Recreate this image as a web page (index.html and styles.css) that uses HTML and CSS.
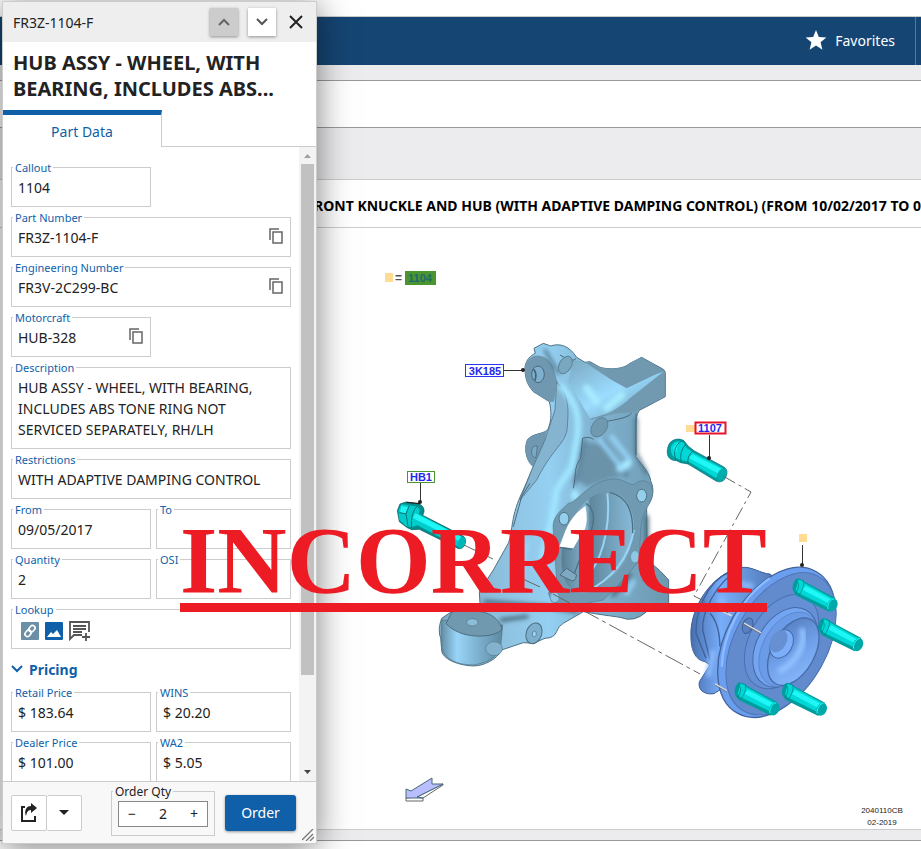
FILE: index.html
```html
<!DOCTYPE html>
<html lang="en">
<head>
    <meta charset="UTF-8">
    <meta name="viewport" content="width=device-width, initial-scale=1.0">
    <title>Front Knuckle and Hub</title>
    <link rel="stylesheet" href="styles.css">
</head>
<body>
    <div class="app">
        <!-- Top navigation -->
        <nav class="navbar">
            <a class="favorites" href="#">
                <svg width="22" height="22" viewBox="0 0 24 24"><path fill="#fff" d="M12 1l3.1 7.6 8.2.6-6.3 5.3 2 8L12 18.100l-7 4.400 2-8L.7 9.200l8.200-.6z"/></svg>
                Favorites
            </a>
        </nav>
        <div class="searchbar"></div>
        <div class="toolbar"></div>

        <main class="illustration">
            <h1 class="section-title"><span class="crumb">E</span>FRONT KNUCKLE AND HUB (WITH ADAPTIVE DAMPING CONTROL) (FROM 10/02/2017 TO 0</h1>
            <svg class="diagram" viewBox="0 228 921 601">
                <defs>
                    <linearGradient id="steel" x1="0" x2="1">
                        <stop offset="0" stop-color="#7fa9c2"/>
                        <stop offset=".3" stop-color="#8fc3e2"/>
                        <stop offset=".48" stop-color="#94d0f2"/>
                        <stop offset=".65" stop-color="#83b6d4"/>
                        <stop offset="1" stop-color="#6c98b0"/>
                    </linearGradient>
                    <linearGradient id="lug" x1="0" x2="1">
                        <stop offset="0" stop-color="#6590a8"/>
                        <stop offset=".25" stop-color="#98d5f8"/>
                        <stop offset="1" stop-color="#5d88a0"/>
                    </linearGradient>
                    <linearGradient id="arm" x1="0" y1="0" x2="1" y2="1">
                        <stop offset="0" stop-color="#7ba8c2"/>
                        <stop offset=".5" stop-color="#9bdcff"/>
                        <stop offset="1" stop-color="#648da5"/>
                    </linearGradient>
                    <linearGradient id="bore" x1="0" x2="1">
                        <stop offset="0" stop-color="#587d92"/>
                        <stop offset=".35" stop-color="#83b6d2"/>
                        <stop offset=".4" stop-color="#5f879d"/>
                        <stop offset="1" stop-color="#88bcda"/>
                    </linearGradient>
                    <linearGradient id="hub" x1="0" x2="1">
                        <stop offset="0" stop-color="#476fae"/>
                        <stop offset=".35" stop-color="#78adf9"/>
                        <stop offset="1" stop-color="#4f77b4"/>
                    </linearGradient>
                    <linearGradient id="cup" x1="0" y1="0" x2="1" y2="1">
                        <stop offset="0" stop-color="#5379b8"/>
                        <stop offset=".5" stop-color="#6f9fe8"/>
                        <stop offset="1" stop-color="#8dbcff"/>
                    </linearGradient>
                    <filter id="soft"><feGaussianBlur stdDeviation="7"/></filter>
                    <g id="stud">
                        <path d="M-2-22L12-18 22-10 112 38 92 78-6 30-14 18C-22 6-14-18-2-22z" fill="#009d9d"/>
                        <path d="M0-18L12-14 22-6 106 40 94 68 0 22-8 14z" fill="#00d8d8"/>
                        <path d="M22 0L102 43 96 56 12 12z" fill="#1ff6f6"/>
                        <path d="M-6-14C4-8 2 10-8 22M14-15C20-8 14 12 2 28" stroke="#077" fill="none" stroke-width="2"/>
                        <ellipse cx="102" cy="58" rx="15" ry="20" transform="rotate(25 102 58)" fill="#00a9a9"/>
                        <path d="M89 70C86 58 96 41 108 39" stroke="#2ff" fill="none" stroke-width="3"/>
                    </g>
                </defs>

                <!-- Knuckle -->
                <g transform="translate(430 330) scale(.3333)">
                    <path fill="url(#steel)" stroke="#4f7184" stroke-width="3" d="M312 55L340 40 362 48C390 38 418 48 440 82L465 97 480 95 510 112C540 120 580 118 600 100L635 82 700 118Q706 122 706 130V200L630 240C615 252 618 290 618 380 640 410 660 430 662 452 675 480 668 510 650 530L652 690 690 722 716 750V820L650 845Q612 880 570 862L500 852 460 845 400 880Q385 888 380 905 372 925 345 925L310 940 280 938 215 960C200 990 160 1008 130 1008 80 1006 35 985 35 960L32 925Q22 900 35 865L65 845 150 820 148 785 190 720 235 640C250 600 240 560 280 480L310 410C285 390 283 350 292 330 305 310 345 312 354 298 366 270 364 240 358 215L310 185C288 160 285 140 285 110 290 88 300 78 316 70z"/>
                    <path fill="#7099b1" d="M286 115C288 70 345 60 370 110L382 155 372 215 358 215 318 190C295 170 285 150 286 115zM292 330C305 312 340 315 352 298L340 350 310 410C285 390 283 355 292 330z"/>
                    <path fill="#85b4d0" d="M380 155C420 200 415 240 412 290 410 340 370 350 320 450L270 510 305 420 345 330 375 240z" stroke="#496777" stroke-width="2"/>
                    <path fill="#7199b0" d="M600 100L635 82 704 122V200L612 247 560 250 480 270 540 215 600 170 700 125 600 110z"/>
                    <path fill="url(#arm)" d="M430 90C480 95 520 135 600 155L700 125 600 205C570 235 520 260 480 265L415 155z"/>
                    <path fill="#7099af" d="M465 97L480 95 510 112C540 120 580 118 600 100L635 82 700 122 590 175 545 150z"/>
                    <path fill="#6b93aa" filter="url(#soft)" d="M462 335L530 345 590 430 470 470 440 450z"/>
                    <g filter="url(#soft)" fill="none" stroke-linecap="round">
                        <path stroke="#a0e6ff" stroke-width="20" d="M395 170C440 220 450 260 442 320L425 410 380 480 365 570 330 720"/>
                        <path stroke="#4e7185" stroke-width="9" d="M462 330L452 385 435 460M345 60L385 130M618 265V370L650 430M520 330L590 435"/>
                        <path stroke="#a7ecff" stroke-width="22" d="M470 175L500 215M530 235L575 195M595 400L570 415M435 492V500"/>
                        <path stroke="#99daff" stroke-width="12" d="M545 320L600 390M510 330L580 420M610 755L590 790M290 640L270 770"/>
                        <path stroke="#486a7c" stroke-width="12" d="M165 815L350 830 440 845M215 870L290 860M550 795L600 735M650 560V640"/>
                    </g>
                    <path fill="none" stroke="#4c6a7b" stroke-width="3" d="M458 325Q478 318 490 328M458 325L452 385C430 415 440 430 430 475M250 590L275 500 300 460M390 75Q430 100 438 85M525 275C560 268 590 265 605 250M618 250V375"/>
                    <ellipse cx="324" cy="133" rx="19" ry="25" fill="#7db0ce" stroke="#496474" stroke-width="3"/>
                    <path d="M310 117Q322 128 315 152" fill="none" stroke="#456272" stroke-width="5"/>
                    <ellipse cx="406" cy="105" rx="18" ry="28" transform="rotate(30 406 105)" fill="#7aa7c0" stroke="#5a8095" stroke-width="3"/>
                    <ellipse cx="508" cy="292" rx="22" ry="32" transform="rotate(35 508 292)" fill="#6f99af" stroke="#52778c" stroke-width="2"/>
                    <path d="M322 348Q305 345 305 365T318 382z" fill="#7baac6" stroke="#4a6575" stroke-width="2"/>

                    <!-- Bearing seat -->
                    <path fill="#709ab1" stroke="#567b90" stroke-width="2" d="M370 600C365 560 390 545 415 520 440 520 470 460 540 448 590 440 600 480 625 455 650 445 670 465 668 490 665 525 635 540 632 600L628 690C600 730 560 770 520 810L420 830 365 815 355 790 380 750z"/>
                    <path fill="url(#bore)" d="M410 600C450 510 500 480 550 486 590 494 618 550 610 610 600 700 530 790 440 790 395 770 380 690 410 600z"/>
                    <path fill="#fff" d="M405 605C420 570 440 545 466 528 475 570 470 600 450 620L430 655 388 650z"/>
                    <path fill="none" stroke="#99d4f4" stroke-width="6" d="M532 490C540 560 530 660 480 730M612 600C595 690 540 750 470 785"/>
                    <path fill="none" stroke="#4d6f82" stroke-width="4" d="M468 520C500 540 495 590 470 630L430 740M540 487C590 500 610 540 608 610M390 652L425 658"/>
                    <path fill="#7da9c2" stroke="#4b6a7b" stroke-width="3" d="M390 735L410 715 440 735Q435 760 420 750z"/>
                    <ellipse cx="635" cy="497" rx="15" ry="19" fill="#95cfee" stroke="#4f7082" stroke-width="3"/>
                    <ellipse cx="402" cy="566" rx="15" ry="19" fill="#95cfee" stroke="#4f7082" stroke-width="3"/>
                    <ellipse cx="615" cy="680" rx="12" ry="17" fill="#8fc8e6"/>
                    <ellipse cx="374" cy="802" rx="12" ry="15" fill="#8fc8e6"/>

                    <!-- Lower arm -->
                    <path fill="url(#lug)" stroke="#506f81" stroke-width="2" d="M35 870V955C45 990 85 1005 130 1005 165 1000 205 985 212 950L218 885Z"/>
                    <path fill="#7098ae" stroke="#4e6c7e" stroke-width="3" d="M48 880L66 846Q100 838 150 845C190 850 218 880 214 900 190 925 90 930 48 880z"/>
                    <ellipse cx="127" cy="877" rx="17" ry="11" fill="#8bbdd9" stroke="#52748a" stroke-width="2"/>
                    <ellipse cx="192" cy="956" rx="25" ry="21" fill="#82b2ce" stroke="#557b91" stroke-width="2"/>
                    <ellipse cx="312" cy="910" rx="23" ry="32" transform="rotate(20 312 910)" fill="#7eb0cd" stroke="#4c6c7f" stroke-width="3"/>
                    <ellipse cx="313" cy="912" rx="6" ry="9" fill="#9bd8f8" stroke="#47677a" stroke-width="2"/>
                </g>

                <!-- Hub assembly -->
                <g transform="translate(670 550) scale(.3333)">
                    <path fill="url(#hub)" stroke="#3d5e96" stroke-width="3" d="M215 52C140 65 70 150 63 240 60 300 75 330 105 335L120 345 88 395C82 425 110 435 132 431L165 410 320 90 300 72C270 70 250 50 215 52z"/>
                    <path fill="none" stroke="#3f609a" stroke-width="4" d="M175 68C115 95 75 180 78 250T108 325M205 60C135 100 95 190 98 240L120 330M120 190Q148 220 150 290"/>
                    <path filter="url(#soft)" fill="none" stroke="#8abaff" stroke-width="16" d="M150 145L175 190M130 300L115 380M200 100L250 110"/>
                    <ellipse cx="320" cy="277" rx="151" ry="243" transform="rotate(29 320 277)" fill="#6c9ef0" stroke="#41639e" stroke-width="4"/>
                    <ellipse cx="333" cy="281" rx="139" ry="231" transform="rotate(29 333 281)" fill="#628bce" stroke="#4d75b6" stroke-width="3"/>
                    <path fill="none" stroke="#8bbcff" stroke-width="7" d="M155 350C160 250 215 140 300 85"/>
                    <ellipse cx="335" cy="275" rx="96" ry="152" transform="rotate(29 335 275)" fill="#6690d5" stroke="#4a70b0" stroke-width="3"/>
                    <ellipse cx="346" cy="292" rx="86" ry="128" transform="rotate(29 346 292)" fill="#74a5f2" stroke="#4569a5" stroke-width="3"/>
                    <ellipse cx="356" cy="298" rx="78" ry="120" transform="rotate(29 356 298)" fill="#6b9ae6" stroke="#557fc4" stroke-width="2"/>
                    <ellipse cx="370" cy="305" rx="64" ry="110" transform="rotate(29 370 305)" fill="url(#cup)" stroke="#456ba9" stroke-width="4"/>
                    <path filter="url(#soft)" fill="none" stroke="#92c2ff" stroke-width="18" d="M395 235C410 280 380 340 325 365"/>
                    <ellipse cx="335" cy="282" rx="32" ry="45" transform="rotate(29 335 282)" fill="#7caef9" stroke="#4569a7" stroke-width="3"/>
                    <ellipse cx="326" cy="274" rx="23" ry="36" transform="rotate(29 326 274)" fill="#6790d3"/>
                    <ellipse cx="233" cy="227" rx="15" ry="24" transform="rotate(20 233 227)" fill="#587fc0" stroke="#3d5f99" stroke-width="3"/>
                    <path fill="none" stroke="#ddd" stroke-width="5" d="M222 220L273 249M135 402L170 422M155 182L185 197"/>
                    <path fill="none" stroke="#555" stroke-width="2" d="M222 223L273 252M135 405L170 425"/>
                    <use href="#stud" x="385" y="107"/>
                    <use href="#stud" x="462" y="226"/>
                    <use href="#stud" x="211" y="419"/>
                    <use href="#stud" x="353" y="420"/>
                </g>

                <!-- Wheel stud 1107 -->
                <g transform="translate(660 410) scale(.3333)">
                    <path fill="#009d9d" stroke="#067" stroke-width="2" d="M23 115C26 92 50 80 72 92L84 108 102 122 190 170C204 178 202 190 198 200 192 216 178 218 168 213L84 162 62 158 50 152C28 152 18 138 23 115z"/>
                    <path fill="#00d8d8" d="M34 108C40 94 56 90 70 98L80 114 100 128 188 174 168 204 84 154 62 150 44 142C34 136 30 120 34 108z"/>
                    <path fill="#1ff6f6" d="M98 133L186 178 178 192 86 144zM40 112L54 98 50 124 42 130z"/>
                    <path fill="none" stroke="#077" stroke-width="3" d="M66 92C46 104 38 125 48 152M78 102Q56 126 64 158M100 122Q80 138 84 162"/>
                    <ellipse cx="186" cy="194" rx="13" ry="20" transform="rotate(25 186 194)" fill="#00adad"/>
                </g>

                <!-- Bolt HB1 -->
                <g transform="translate(380 440) scale(.3333)">
                    <path fill="#008f8f" stroke="#055" stroke-width="2" d="M52 212L60 192 78 186 118 192Q134 200 132 216L128 226 245 286Q258 292 257 306 252 328 236 326L118 268 95 269 80 262 58 245z"/>
                    <path fill="#00cccc" d="M55 212L64 193 88 196 112 200Q122 206 116 222L246 290 236 320 112 256 94 262 78 258 58 240z"/>
                    <path fill="#1ff6f6" d="M106 220L244 290 238 304 98 234zM64 198L84 202 76 220 60 216z"/>
                    <path fill="none" stroke="#077" stroke-width="3" d="M88 196L78 222 84 258M58 218L78 222M112 198Q92 216 94 264"/>
                    <path stroke="#222" stroke-width="4" d="M80 187L120 191"/>
                    <ellipse cx="245" cy="308" rx="11" ry="18" transform="rotate(20 245 308)" fill="#00b5b5"/>
                </g>

                <!-- Centre lines -->
                <g fill="none" stroke="#666" stroke-width="1">
                    <path d="M464 545L493 559M512 574L540 587"/>
                    <path d="M553 594L700 674" stroke-dasharray="20 4 4 4"/>
                    <path d="M723 476L751 492 694 596 730 614" stroke-dasharray="14 4 3 4"/>
                    <path stroke="#333" d="M504 370.500H522M420.500 483V502M709.500 435V457M802.500 545V565"/>
                </g>
                <g fill="#222">
                    <circle cx="523" cy="370" r="2"/>
                    <circle cx="420" cy="502" r="2"/>
                    <circle cx="709" cy="458" r="2"/>
                    <circle cx="802" cy="565" r="2"/>
                </g>

                <!-- Callouts -->
                <g fill="#ffdc93">
                    <rect x="385" y="273" width="8" height="9"/>
                    <rect x="686" y="425" width="9" height="7"/>
                    <rect x="799" y="534" width="8" height="8"/>
                </g>
                <rect x="405" y="271" width="31" height="14" fill="#4b9530"/>
                <g fill="#fff" stroke-width="1">
                    <rect x="465.500" y="364.500" width="38" height="12" stroke="#2c35ee"/>
                    <rect x="407.500" y="471.500" width="27" height="11" stroke="#4b9530"/>
                    <rect x="695.500" y="422.500" width="30" height="11" stroke="#e5142b" stroke-width="2"/>
                </g>
                <text class="note" x="395" y="282">=</text>
                <text class="callout callout-active" x="420" y="282">1104</text>
                <text class="callout" x="485" y="375">3K185</text>
                <text class="callout" x="421" y="481">HB1</text>
                <text class="callout" x="710" y="432">1107</text>
                <text class="reference" x="882" y="813">2040110CB</text>
                <text class="reference" x="882" y="825">02-2019</text>

                <!-- Front-of-vehicle arrow -->
                <path d="M406 798V801H423V798L443 785V784L417 797z" fill="#fff" stroke="#666"/>
                <path d="M406 789L411 791 432 778V784H443L417 797 423 798H406z" fill="#b9beff" stroke="#466879"/>
            </svg>
        </main>
        <div class="bottom-strip"></div>
    </div>

    <!-- Part window -->
    <section class="panel">
        <header class="panel-header">
            <span class="panel-id">FR3Z-1104-F</span>
            <button class="step" aria-label="Previous part" disabled>
                <svg width="12" height="8" viewBox="0 0 12 8"><path d="M1 7l5-5 5 5" fill="none" stroke="#666" stroke-width="2"/></svg>
            </button>
            <button class="step" aria-label="Next part">
                <svg width="12" height="8" viewBox="0 0 12 8"><path d="M1 1l5 5 5-5" fill="none" stroke="#555" stroke-width="2"/></svg>
            </button>
            <button class="close" aria-label="Close">
                <svg width="14" height="14" viewBox="0 0 14 14"><path d="M1 1l12 12M13 1L1 13" stroke="#222" stroke-width="2"/></svg>
            </button>
        </header>
        <h2 class="panel-title">HUB ASSY - WHEEL, WITH BEARING, INCLUDES ABS...</h2>
        <div class="tabs">
            <button class="tab">Part Data</button>
        </div>

        <div class="panel-body">
            <div class="fields">
                <fieldset class="field">
                    <legend>Callout</legend>
                    <div class="value">1104</div>
                </fieldset>
                <fieldset class="field wide">
                    <legend>Part Number</legend>
                    <div class="value">FR3Z-1104-F
                        <button class="copy" aria-label="Copy part number"><svg width="14" height="16" viewBox="0 0 14 16"><path d="M1 12V1h9M4 4h9v11H4z" fill="none" stroke="#666" stroke-width="1.500"/></svg></button>
                    </div>
                </fieldset>
                <fieldset class="field wide">
                    <legend>Engineering Number</legend>
                    <div class="value">FR3V-2C299-BC
                        <button class="copy" aria-label="Copy engineering number"><svg width="14" height="16" viewBox="0 0 14 16"><path d="M1 12V1h9M4 4h9v11H4z" fill="none" stroke="#666" stroke-width="1.500"/></svg></button>
                    </div>
                </fieldset>
                <fieldset class="field first">
                    <legend>Motorcraft</legend>
                    <div class="value">HUB-328
                        <button class="copy" aria-label="Copy Motorcraft number"><svg width="14" height="16" viewBox="0 0 14 16"><path d="M1 12V1h9M4 4h9v11H4z" fill="none" stroke="#666" stroke-width="1.500"/></svg></button>
                    </div>
                </fieldset>
                <fieldset class="field wide">
                    <legend>Description</legend>
                    <div class="value">HUB ASSY - WHEEL, WITH BEARING, INCLUDES ABS TONE RING NOT SERVICED SEPARATELY, RH/LH</div>
                </fieldset>
                <fieldset class="field wide">
                    <legend>Restrictions</legend>
                    <div class="value">WITH ADAPTIVE DAMPING CONTROL</div>
                </fieldset>
                <fieldset class="field">
                    <legend>From</legend>
                    <div class="value">09/05/2017</div>
                </fieldset>
                <fieldset class="field">
                    <legend>To</legend>
                    <div class="value"></div>
                </fieldset>
                <fieldset class="field">
                    <legend>Quantity</legend>
                    <div class="value">2</div>
                </fieldset>
                <fieldset class="field">
                    <legend>OSI</legend>
                    <div class="value"></div>
                </fieldset>
                <fieldset class="field wide">
                    <legend>Lookup</legend>
                    <div class="value lookup">
                        <button aria-label="Linked parts">
                            <svg width="18" height="18" viewBox="0 0 18 18"><rect width="18" height="18" rx="1" fill="#6b90a5"/><g transform="rotate(-50 9 9)" fill="none" stroke="#fff" stroke-width="1.600"><rect x="2.500" y="6.500" width="7" height="5" rx="2.500"/><rect x="8.500" y="6.500" width="7" height="5" rx="2.500"/></g></svg>
                        </button>
                        <button aria-label="Pictures">
                            <svg width="18" height="18" viewBox="0 0 18 18"><rect width="18" height="18" rx="1" fill="#0f5fa9"/><path d="M2 15l4-5 2 2 4-4 4 7z" fill="#fff"/></svg>
                        </button>
                        <button aria-label="Add note">
                            <svg width="22" height="20" viewBox="0 0 22 20"><path d="M20 11V1H1v17l4-4h8M4 5h13M4 8h13M4 11h9M17 12v8M13 16h8" fill="none" stroke="#555" stroke-width="1.800"/></svg>
                        </button>
                    </div>
                </fieldset>
                <button class="group-title">
                    <svg width="12" height="8" viewBox="0 0 12 8"><path d="M1 1l5 5 5-5" fill="none" stroke="#0f5fa9" stroke-width="2"/></svg>
                    Pricing
                </button>
                <fieldset class="field">
                    <legend>Retail Price</legend>
                    <div class="value">$ 183.64</div>
                </fieldset>
                <fieldset class="field">
                    <legend>WINS</legend>
                    <div class="value">$ 20.20</div>
                </fieldset>
                <fieldset class="field">
                    <legend>Dealer Price</legend>
                    <div class="value">$ 101.00</div>
                </fieldset>
                <fieldset class="field">
                    <legend>WA2</legend>
                    <div class="value">$ 5.05</div>
                </fieldset>
            </div>
            <div class="scrollbar">
                <svg width="7" height="4" viewBox="0 0 7 4"><path d="M0 4l3.500-4L7 4z" fill="#a0a0a0"/></svg>
                <div class="thumb"></div>
                <svg width="7" height="4" viewBox="0 0 7 4"><path d="M0 0l3.500 4L7 0z" fill="#444"/></svg>
            </div>
        </div>

        <footer class="panel-footer">
            <div class="share">
                <button aria-label="Share">
                    <svg width="18" height="20" viewBox="0 0 18 20"><path d="M5 4H2v14h13v-5" fill="none" stroke="#222" stroke-width="2"/><path d="M11 0l6 5-6 5V7C8 7 7 9 6 13 4 8 6 3 11 3z" fill="#222"/></svg>
                </button>
                <button aria-label="More actions">
                    <svg width="10" height="5" viewBox="0 0 10 5"><path d="M0 0h10L5 5z" fill="#222"/></svg>
                </button>
            </div>
            <fieldset class="quantity">
                <legend><label for="qty">Order Qty</label></legend>
                <div class="stepper">
                    <button aria-label="Less">−</button>
                    <input id="qty" type="text" value="2">
                    <button aria-label="More">+</button>
                </div>
            </fieldset>
            <button class="order">Order</button>
            <svg class="grip" width="12" height="12" viewBox="0 0 12 12"><path d="M0 11L11 0M4 12l7-7M8 12l4-4" stroke="#777" stroke-width="1.300"/></svg>
        </footer>
    </section>

    <div class="stamp">INCORRECT</div>
</body>
</html>
```
FILE: styles.css
```css
/* General Styling */
* {
    box-sizing: border-box;
}
body {
    margin: 0;
    overflow: hidden;
    font-family: "Noto Sans", "Open Sans", sans-serif;
    font-size: 14px;
    color: #222;
    background: #fff;
}
button {
    display: flex;
    align-items: center;
    justify-content: center;
    margin: 0;
    padding: 0;
    border: none;
    background: none;
    font: inherit;
    color: inherit;
    cursor: pointer;
}

/* Page behind the part window */
.app {
    display: flex;
    flex-direction: column;
    height: 100vh;
    padding: 16px 0 8px;
}
.navbar {
    display: flex;
    flex: none;
    justify-content: flex-end;
    height: 49px;
    padding-right: 5px;
    border-top: 1px solid #ccc;
    background: #154573;
}
.favorites {
    display: flex;
    align-items: center;
    gap: 8px;
    padding: 0 20px 2px 0;
    border-right: 1px solid #58789a;
    color: #fff;
    text-decoration: none;
}
.searchbar {
    flex: none;
    height: 63px;
    border-top: 15px solid #ecebed;
    border-bottom: 1px solid #999;
    box-shadow: inset 0 1px #999;
}
.toolbar {
    flex: none;
    height: 51px;
    background: #ecebed;
}
.illustration {
    flex: 1;
    min-height: 0;
    overflow: hidden;
    border-top: 1px solid #ccc;
    border-bottom: 1px solid #ccc;
}
.section-title {
    display: flex;
    gap: 306px;
    height: 48px;
    margin: 0;
    border-bottom: 1px solid #ccc;
    font-size: 14px;
    line-height: 52px;
    color: #000;
    white-space: nowrap;
}
.crumb {
    display: flex;
    justify-content: flex-end;
    width: 3px;
    overflow: hidden;
}
.bottom-strip {
    flex: none;
    height: 11px;
    border-bottom: 1px solid #999;
    background: #ecebed;
}

/* Diagram */
.diagram {
    display: block;
    width: 100%;
}
.callout {
    font: bold 11px "Liberation Sans", sans-serif;
    text-anchor: middle;
    fill: #1f28ee;
}
.callout-active {
    fill: #1d6b69;
}
.note {
    font: bold 12px "Liberation Sans", sans-serif;
    fill: #555;
}
.reference {
    font: 8px "Liberation Sans", sans-serif;
    text-anchor: middle;
    fill: #222;
}

/* Part window */
.panel {
    position: absolute;
    top: 1px;
    bottom: 5px;
    left: 2px;
    display: flex;
    flex-direction: column;
    width: 315px;
    border: 1px solid #ccc;
    background: #fff;
    box-shadow: 0 4px 32px rgba(0, 0, 0, 0.5);
}
.panel-header {
    display: flex;
    flex: none;
    align-items: center;
    gap: 10px;
    height: 40px;
    padding: 0 10px;
    background: #eee;
}
.panel-id {
    flex: 1;
}
.step {
    width: 28px;
    height: 28px;
    background: #fff;
    box-shadow: 0 1px 3px rgba(0, 0, 0, 0.4);
}
.step:disabled {
    background: #ccc;
}
.close {
    width: 20px;
    height: 28px;
}
.panel-title {
    margin: 0;
    padding: 8px 10px;
    font-size: 20px;
    line-height: 26px;
}
.tabs {
    display: flex;
    flex: none;
    height: 37px;
}
.tabs::after {
    content: "";
    flex: 1;
    border-bottom: 1px solid #ccc;
}
.tab {
    width: 159px;
    border-top: 5px solid #0f5fa9;
    border-right: 1px solid #ccc;
    color: #0f5fa9;
}
.panel-body {
    display: flex;
    flex: 1;
    min-height: 0;
    overflow: hidden;
}

/* Fields */
.fields {
    display: grid;
    flex: 1;
    grid-template-columns: 140px 1fr;
    gap: 3px 5px;
    align-content: start;
    padding: 13px 8px 0;
}
.field {
    min-width: 0;
    margin: 0;
    padding: 0;
    border: 1px solid #ccc;
}
.first {
    grid-column: 1;
}
.wide,
.group-title {
    grid-column: 1 / -1;
}
.field legend,
.quantity legend {
    margin-left: 1px;
    padding: 0 2px;
    font-size: 12px;
    line-height: 15px;
}
.field legend {
    font-size: 11px;
    color: #0f5fa9;
}
.value {
    display: flex;
    justify-content: space-between;
    min-height: 31px;
    padding: 2px 7px 8px 6px;
    line-height: 21px;
}
.copy {
    height: 18px;
}
.lookup {
    align-items: center;
    justify-content: flex-start;
    gap: 6px;
    padding: 3px 7px 6px 9px;
}
.group-title {
    justify-content: flex-start;
    gap: 6px;
    height: 30px;
    padding-top: 4px;
    font-weight: bold;
    color: #0f5fa9;
}

/* Scrollbar */
.scrollbar {
    display: flex;
    flex: none;
    flex-direction: column;
    align-items: center;
    width: 17px;
    padding: 7px 0;
    background: #f3f3f3;
}
.thumb {
    flex: 1;
    width: 13px;
    margin: 6px 0 95px;
    background: #c1c1c1;
}

/* Footer */
.panel-footer {
    display: flex;
    flex: none;
    align-items: center;
    height: 62px;
    padding-left: 8px;
    border-top: 1px solid #ccc;
    background: #f8f8f8;
}
.share {
    display: flex;
    margin-right: auto;
}
.share button {
    width: 36px;
    height: 36px;
    border: 1px solid #ccc;
    border-radius: 2px;
    background: #fff;
}
.share button + button {
    width: 35px;
    border-left: none;
}
.quantity {
    width: 104px;
    margin: 0 10px 6px 0;
    padding: 0;
    border: 1px solid #ccc;
}
.stepper {
    display: flex;
    height: 26px;
    margin: 2px 6px 8px;
    border: 1px solid #888;
    background: #fff;
}
.stepper button {
    width: 26px;
}
.stepper input {
    flex: 1;
    width: 20px;
    min-width: 0;
    padding: 0;
    border: none;
    font: inherit;
    color: inherit;
    text-align: center;
}
.order {
    width: 71px;
    height: 36px;
    border-radius: 3px;
    background: #0f5fa9;
    box-shadow: 0 1px 3px rgba(0, 0, 0, 0.4);
    color: #fff;
}
.grip {
    align-self: flex-end;
    margin: 0 2px 2px 6px;
}

/* Stamp */
.stamp {
    position: absolute;
    top: 519px;
    left: 180px;
    border-bottom: 9px solid #ed1c24;
    font: bold 96px "Liberation Serif", serif;
    line-height: 84px;
    color: #ed1c24;
}
```
